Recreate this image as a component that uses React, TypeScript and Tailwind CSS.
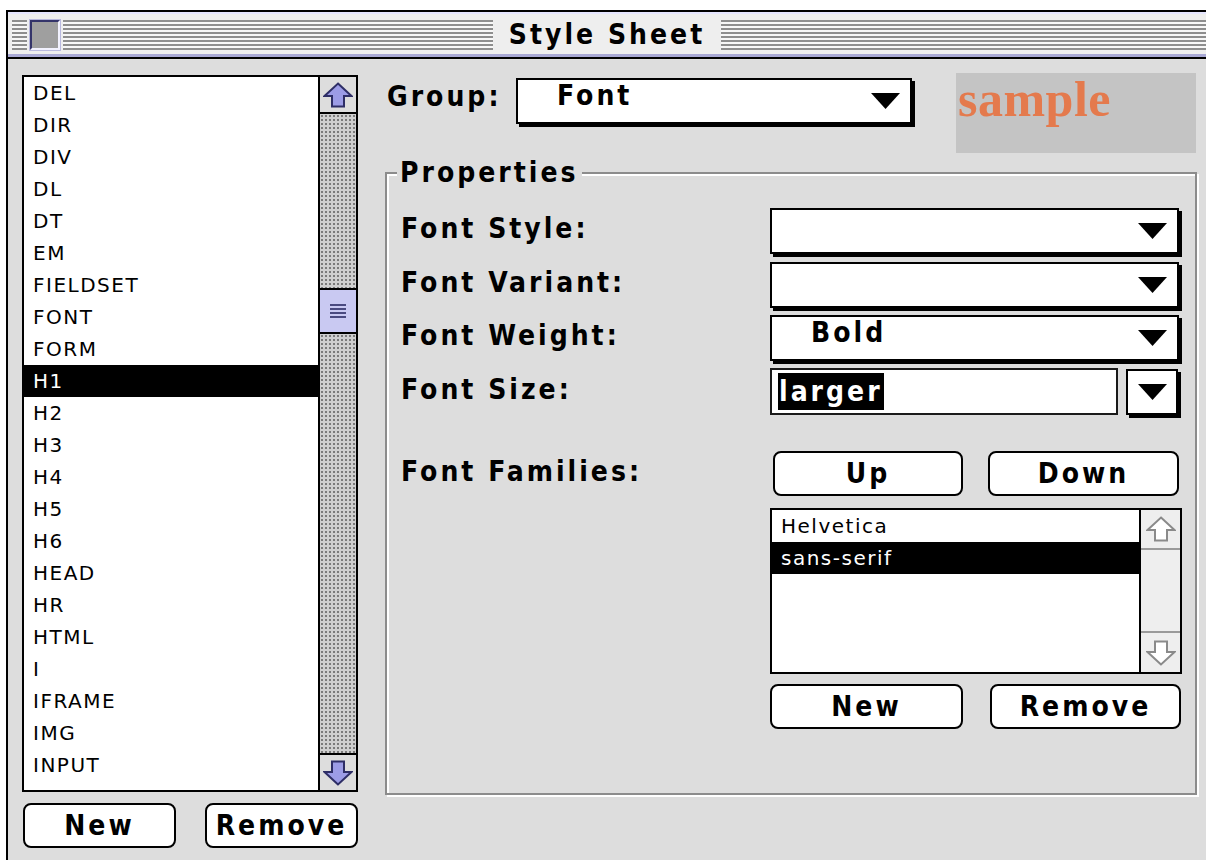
import React from "react";

const chicago =
  "font-['DejaVu_Sans_Condensed','DejaVu_Sans',sans-serif] font-stretch-condensed font-bold text-[28px] tracking-[3px] text-black";
const geneva = "font-['DejaVu_Sans',sans-serif] text-[20px] tracking-[1.5px]";

const tags = [
  "DEL", "DIR", "DIV", "DL", "DT", "EM", "FIELDSET", "FONT", "FORM", "H1", "H2",
  "H3", "H4", "H5", "H6", "HEAD", "HR", "HTML", "I", "IFRAME", "IMG", "INPUT",
];

function Triangle() {
  return (
    <svg width="29" height="16" viewBox="0 0 29 16" className="block">
      <polygon points="0,0 29,0 14.5,16" fill="#000" />
    </svg>
  );
}

function Arrow({ down, outline }: { down?: boolean; outline?: boolean }) {
  return (
    <svg
      width="30"
      height="26"
      viewBox="0 0 30 26"
      className={down ? "block rotate-180" : "block"}
    >
      <polygon
        points="15,1.5 28.5,14 21,14 21,24.5 9,24.5 9,14 1.5,14"
        fill={outline ? "#ffffff" : "#9c9ce6"}
        stroke={outline ? "#8a8a8a" : "#2e2e66"}
        strokeWidth="2"
        strokeLinejoin="miter"
      />
    </svg>
  );
}

function Stripes({ className }: { className: string }) {
  return (
    <div
      className={
        "h-[30px] bg-[image:repeating-linear-gradient(to_bottom,#8e8e8e_0px,#8e8e8e_2px,#f7f7f7_2px,#f7f7f7_4px)] " +
        className
      }
    />
  );
}

function Popup({ label, width }: { label?: string; width: string }) {
  return (
    <div
      className={
        "flex items-center h-[46px] bg-white border-2 border-black shadow-[3px_3px_0_#000] " +
        width
      }
    >
      <span className={chicago + " pl-[39px] leading-none mb-[10px]"}>{label}</span>
      <span className="ml-auto mr-[10px]">
        <Triangle />
      </span>
    </div>
  );
}

function Button({ label, width }: { label: string; width: string }) {
  return (
    <div
      className={
        "flex items-center justify-center h-[45px] rounded-[8px] border-2 border-black bg-white " +
        width
      }
    >
      <span className={chicago + " leading-none"}>{label}</span>
    </div>
  );
}

function TitleBar() {
  return (
    <div className="h-[47px] flex flex-col bg-[#eeeeee] border-t-2 border-[#e6e6ff]">
      <div className="flex-1 grid grid-cols-[1fr_auto_1fr] items-center pt-[2px]">
        <div className="flex items-center">
          <Stripes className="w-[15px] ml-[4px]" />
          <div className="ml-[3px] w-[30px] h-[30px] border-2 border-t-[#34346a] border-l-[#34346a] border-r-[#f2f2ff] border-b-[#f2f2ff] bg-[#9f9f9f] shadow-[0_0_0_1px_#b8b8de]" />
          <Stripes className="flex-1 ml-[3px]" />
        </div>
        <div className={chicago + " px-[16px] leading-none"}>Style Sheet</div>
        <Stripes className="flex-1" />
      </div>
      <div className="h-[3px] bg-[#a8a8d4]" />
      <div className="h-[2px] bg-black" />
    </div>
  );
}

function TagList() {
  return (
    <div className="mt-[2px] h-[717px] flex border-2 border-black bg-white">
      <div className="flex-1 flex flex-col">
        {tags.map((t) => (
          <div
            key={t}
            className={
              geneva +
              " h-[32px] flex items-center pl-[9px] " +
              (t === "H1" ? "bg-black text-white" : "text-black")
            }
          >
            {t}
          </div>
        ))}
      </div>
      <div className="w-[38px] border-l-2 border-black flex flex-col">
        <div className="h-[37px] border-b-2 border-black bg-[#dddddd] flex items-center justify-center">
          <Arrow />
        </div>
        <div className="flex-1 flex flex-col bg-[#cfcfcf] bg-[image:radial-gradient(circle,#7a7a7a_1px,transparent_1.4px)] bg-[length:4px_4px]">
          <div className="mt-[174px] h-[46px] border-y-2 border-black bg-[#c9c9f2] flex flex-col items-center justify-center gap-[2px]">
            <div className="w-[16px] h-[2px] bg-[#4a4a80]" />
            <div className="w-[16px] h-[2px] bg-[#4a4a80]" />
            <div className="w-[16px] h-[2px] bg-[#4a4a80]" />
            <div className="w-[16px] h-[2px] bg-[#4a4a80]" />
          </div>
        </div>
        <div className="h-[37px] border-t-2 border-black bg-[#dddddd] flex items-center justify-center">
          <Arrow down />
        </div>
      </div>
    </div>
  );
}

function FamilyList() {
  return (
    <div className="mt-[12px] ml-[369px] w-[412px] h-[166px] flex border-2 border-black bg-white">
      <div className="flex-1 flex flex-col">
        <div className={geneva + " h-[32px] flex items-center pl-[9px] text-black"}>Helvetica</div>
        <div className={geneva + " h-[32px] flex items-center pl-[9px] bg-black text-white"}>
          sans-serif
        </div>
      </div>
      <div className="w-[41px] border-l-2 border-black bg-[#eeeeee] flex flex-col">
        <div className="h-[40px] border-b-2 border-[#9a9a9a] flex items-center justify-center">
          <Arrow outline />
        </div>
        <div className="flex-1" />
        <div className="h-[41px] border-t-2 border-[#9a9a9a] flex items-center justify-center">
          <Arrow outline down />
        </div>
      </div>
    </div>
  );
}

function Row({ label, children, className }: { label: string; children: React.ReactNode; className: string }) {
  return (
    <div className={"flex items-center " + className}>
      <div className={chicago + " w-[369px] leading-none -mt-[4px]"}>{label}</div>
      {children}
    </div>
  );
}

export default function App() {
  return (
    <div className="w-[1206px] h-[860px] overflow-hidden bg-white pt-[10px] pl-[6px]">
      <div className="h-[850px] border-l-2 border-t-2 border-black bg-[#dddddd] flex flex-col">
        <TitleBar />
        <div className="flex flex-1 pl-[14px] pt-[14px]">
          {/* element list */}
          <div className="w-[336px] flex flex-col">
            <TagList />
            <div className="mt-[11px] flex">
              <Button label="New" width="w-[153px] ml-[1px]" />
              <Button label="Remove" width="w-[153px] ml-auto" />
            </div>
          </div>

          {/* properties side */}
          <div className="ml-[27px] flex-1 flex flex-col">
            <div className="h-[80px] flex items-start">
              <div className={chicago + " w-[131px] pl-[2px] mt-[10px] leading-none"}>Group:</div>
              <div className="mt-[5px]">
                <Popup label="Font" width="w-[396px]" />
              </div>
              <div className="ml-[44px] w-[240px] h-[80px] bg-[#c4c4c4] pl-[2px] pt-[3px]">
                <span className="font-['Liberation_Serif',serif] font-bold text-[50px] leading-[46px] tracking-[0.5px] text-[#e47a4d]">
                  sample
                </span>
              </div>
            </div>

            <div className="relative mt-[19px] w-[812px] h-[623px] border-2 border-[#8c8c8c] shadow-[2px_2px_0_#ffffff,inset_2px_2px_0_#ffffff] pt-[34px] pl-[14px]">
              <div className={chicago + " absolute left-[10px] -top-[17px] px-[3px] bg-[#dddddd] leading-[32px]"}>
                Properties
              </div>

              <Row label="Font Style:" className="">
                <Popup width="w-[409px]" />
              </Row>
              <Row label="Font Variant:" className="mt-[8px]">
                <Popup width="w-[409px]" />
              </Row>
              <Row label="Font Weight:" className="mt-[7px]">
                <Popup label="Bold" width="w-[409px]" />
              </Row>
              <Row label="Font Size:" className="mt-[7px]">
                <div className="w-[348px] h-[47px] border-2 border-[#1a1a1a] bg-white flex items-center pl-[6px]">
                  <span className={chicago + " bg-black text-white leading-[37px] tracking-[1px] px-[1px]"}>
                    larger
                  </span>
                </div>
                <div className="ml-[8px] w-[52px] h-[46px] bg-white border-2 border-black shadow-[3px_3px_0_#000] flex items-center justify-center">
                  <Triangle />
                </div>
              </Row>
              <Row label="Font Families:" className="mt-[36px]">
                <Button label="Up" width="w-[190px] h-[44px] ml-[3px]" />
                <Button label="Down" width="w-[191px] ml-[25px]" />
              </Row>
              <FamilyList />
              <div className="mt-[10px] ml-[369px] flex">
                <Button label="New" width="w-[193px]" />
                <Button label="Remove" width="w-[191px] ml-[27px]" />
              </div>
            </div>
          </div>
        </div>
      </div>
    </div>
  );
}
